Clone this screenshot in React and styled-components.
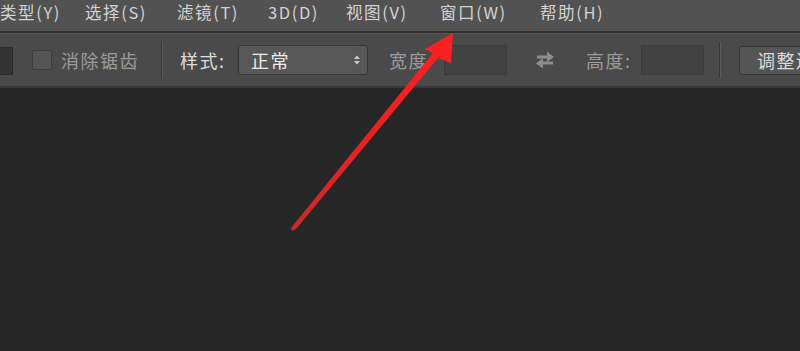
import React from "react";
import styled, { createGlobalStyle } from "styled-components";

const Global = createGlobalStyle`
  html, body { margin: 0; padding: 0; background: #262626; }
  body { font-family: "Noto Sans CJK SC", "Noto Sans", sans-serif; overflow: hidden; }
`;

const Page = styled.div`
  position: relative;
  width: 800px;
  height: 351px;
  overflow: hidden;
  background: #262626;
  display: flex;
  flex-direction: column;
`;

const MenuBar = styled.div`
  height: 33px;
  box-sizing: border-box;
  background: #525252;
  border-bottom: 2px solid #2f2f2f;
  display: flex;
  align-items: flex-start;
`;

const MenuItem = styled.span`
  flex: 0 0 ${(p) => p.$w}px;
  font-size: 16.5px;
  line-height: normal;
  color: #d4d4d4;
  white-space: nowrap;
  letter-spacing: 1.6px;
`;

const Toolbar = styled.div`
  height: 55px;
  background: #4a4a4a;
  border-top: 1px solid #575757;
  border-bottom: 2px solid #3a3a3a;
  display: flex;
  align-items: center;
  box-sizing: border-box;
`;

const DarkBox = styled.div`
  flex: 0 0 13px;
  height: 28px;
  background: #333;
  border: 1px solid #2a2a2a;
  border-left: none;
  box-sizing: border-box;
  margin-top: 2px;
`;

const Checkbox = styled.div`
  flex: 0 0 20px;
  height: 20px;
  margin-left: 19px;
  background: #555;
  border: 1px solid #3c3c3c;
  border-radius: 2px;
  box-sizing: border-box;
`;

const Label = styled.span`
  flex: 0 0 ${(p) => p.$w}px;
  margin-left: ${(p) => p.$ml || 0}px;
  font-size: 18px;
  color: ${(p) => (p.$dim ? "#9c9c9c" : "#dedede")};
  white-space: nowrap;
  letter-spacing: 1.5px;
`;

const Separator = styled.div`
  flex: 0 0 1px;
  height: 36px;
  margin-left: ${(p) => p.$ml}px;
  background: #363636;
  box-shadow: 1px 0 0 #5a5a5a;
`;

const Select = styled.div`
  flex: 0 0 130px;
  height: 30px;
  background: #575757;
  border: 1px solid #363636;
  border-radius: 3px;
  box-sizing: border-box;
  display: flex;
  align-items: center;
  justify-content: space-between;
  padding: 0 6px 0 12px;
  color: #ececec;
  font-size: 18px;
  letter-spacing: 1.5px;
`;

const Input = styled.div`
  flex: 0 0 63px;
  height: 30px;
  background: #424242;
  border: 1px solid #3a3a3a;
  box-sizing: border-box;
`;

const Button = styled.div`
  margin-left: 19px;
  flex: 0 0 90px;
  height: 29px;
  background: #555;
  border: 1px solid #363636;
  border-radius: 3px;
  box-sizing: border-box;
  display: flex;
  align-items: center;
  padding-left: 17px;
  color: #dcdcdc;
  font-size: 18px;
  letter-spacing: 1.5px;
  white-space: nowrap;
  overflow: hidden;
`;

const Canvas = styled.div`
  flex: 1;
  background: #262626;
`;

const Overlay = styled.svg`
  position: absolute;
  left: 0;
  top: 0;
  pointer-events: none;
`;

const IconSlot = styled.div`
  flex: 0 0 ${(p) => p.$w}px;
  margin-left: ${(p) => p.$ml}px;
  display: flex;
  align-items: center;
`;

const SelArrows = () => (
  <svg width="8" height="12" viewBox="0 0 8 12">
    <path d="M1 5 L4 1.5 L7 5 Z" fill="#cfcfcf" />
    <path d="M1 7 L4 10.5 L7 7 Z" fill="#cfcfcf" />
  </svg>
);

const SwapIcon = () => (
  <svg width="22" height="18" viewBox="0 0 22 18">
    <path d="M3 4.5 H13 V0.5 L20 6 L13 11 V7.5 H3 Z" fill="#8e8e8e" />
    <path d="M19 10.5 H9 V7 L2 12.5 L9 17.5 V13.5 H19 Z" fill="#8e8e8e" />
  </svg>
);

export default function App() {
  return (
    <>
      <Global />
      <Page>
        <MenuBar>
          <MenuItem $w={85}>类型(Y)</MenuItem>
          <MenuItem $w={92}>选择(S)</MenuItem>
          <MenuItem $w={91}>滤镜(T)</MenuItem>
          <MenuItem $w={78}>3D(D)</MenuItem>
          <MenuItem $w={94}>视图(V)</MenuItem>
          <MenuItem $w={100}>窗口(W)</MenuItem>
          <MenuItem $w={90}>帮助(H)</MenuItem>
        </MenuBar>
        <Toolbar>
          <DarkBox />
          <Checkbox />
          <Label $dim $ml={9} $w={91}>消除锯齿</Label>
          <Separator $ml={9} />
          <Label $ml={18} $w={58}>样式:</Label>
          <Select>
            <span>正常</span>
            <SelArrows />
          </Select>
          <Label $dim $ml={21} $w={55}>宽度</Label>
          <Input />
          <IconSlot $ml={27} $w={22}>
            <SwapIcon />
          </IconSlot>
          <Label $dim $ml={30} $w={55}>高度:</Label>
          <Input />
          <Separator $ml={15} />
          <Button>调整边缘...</Button>
        </Toolbar>
        <Canvas />
        <Overlay width="800" height="351" viewBox="0 0 800 351">
          <defs>
            <linearGradient id="ag" x1="293" y1="230" x2="452" y2="34" gradientUnits="userSpaceOnUse">
              <stop offset="0" stopColor="#c62b2b" />
              <stop offset="0.4" stopColor="#e52222" />
              <stop offset="1" stopColor="#ff2020" />
            </linearGradient>
          </defs>
          <polygon
            points="292,231 296,229 438,58 451,63 453,33 425,49 433,53 291,228"
            fill="url(#ag)"
          />
        </Overlay>
      </Page>
    </>
  );
}
